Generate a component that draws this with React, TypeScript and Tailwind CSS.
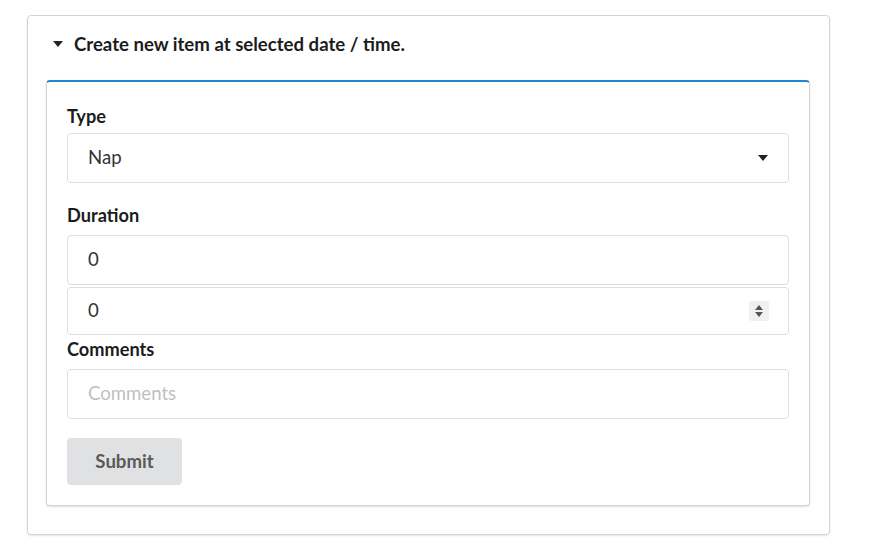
import React from "react";

function Caret() {
  return (
    <svg width="10" height="6" viewBox="0 0 10 6" className="block">
      <path d="M0 0 L10 0 L5 6 Z" fill="#222" />
    </svg>
  );
}

function Spinner() {
  return (
    <div className="w-[20px] h-[20px] bg-[#f0f0f0] rounded-[2px] flex flex-col items-center justify-center gap-[2px]">
      <svg width="8" height="5" viewBox="0 0 8 5" className="block">
        <path d="M0 5 L8 5 L4 0 Z" fill="#555" />
      </svg>
      <svg width="8" height="5" viewBox="0 0 8 5" className="block">
        <path d="M0 0 L8 0 L4 5 Z" fill="#555" />
      </svg>
    </div>
  );
}

export default function App() {
  return (
    <div
      className="w-[870px] h-[560px] bg-white pt-[15px] pl-[27px]"
      style={{ fontFamily: "Lato, 'Noto Sans', sans-serif" }}
    >
      <div className="w-[803px] h-[520px] border border-[#d4d4d5] rounded-[4px] pt-[16px] px-[18px] shadow-[0_1px_2px_rgba(34,36,38,0.12)]">
        <div className="flex items-center h-[24px] pl-[7px] gap-[11px] text-[18.6px] leading-[24px] font-bold text-[#1b1c1d]">
          <Caret />
          <span>Create new item at selected date / time.</span>
        </div>
        <div className="mt-[24px] w-[764px] h-[426px] border border-[#d4d4d5] border-t-2 border-t-[#2185d0] rounded-[4px] shadow-[0_1px_2px_rgba(34,36,38,0.15)] px-[20px] pt-[22px]">
          <div className="text-[18.2px] leading-[24px] font-bold text-[#1b1c1d]">Type</div>
          <div className="mt-[5px] h-[50px] border border-[#dedede] rounded-[4px] flex items-center justify-between pl-[20px] pr-[20px] text-[18.6px] text-[#333]">
            <span>Nap</span>
            <Caret />
          </div>
          <div className="mt-[20px] text-[18.2px] leading-[24px] font-bold text-[#1b1c1d]">Duration</div>
          <div className="mt-[8px] h-[50px] border border-[#dedede] rounded-[4px] flex items-center pl-[20px] text-[18.6px] text-[#333]">
            <span>0</span>
          </div>
          <div className="mt-[2px] h-[48px] border border-[#dedede] rounded-[4px] flex items-center justify-between pl-[20px] pr-[19px] text-[18.6px] text-[#333]">
            <span>0</span>
            <Spinner />
          </div>
          <div className="mt-[2px] text-[18.2px] leading-[24px] font-bold text-[#1b1c1d]">Comments</div>
          <div className="mt-[8px] h-[50px] border border-[#dedede] rounded-[4px] flex items-center pl-[20px] text-[18.6px] text-[#bfbfbf]">
            <span>Comments</span>
          </div>
          <button className="mt-[19px] w-[115px] h-[47px] bg-[#e0e1e2] rounded-[4px] text-[18.6px] font-bold text-[#5a5a5a]">
            Submit
          </button>
        </div>
      </div>
    </div>
  );
}
